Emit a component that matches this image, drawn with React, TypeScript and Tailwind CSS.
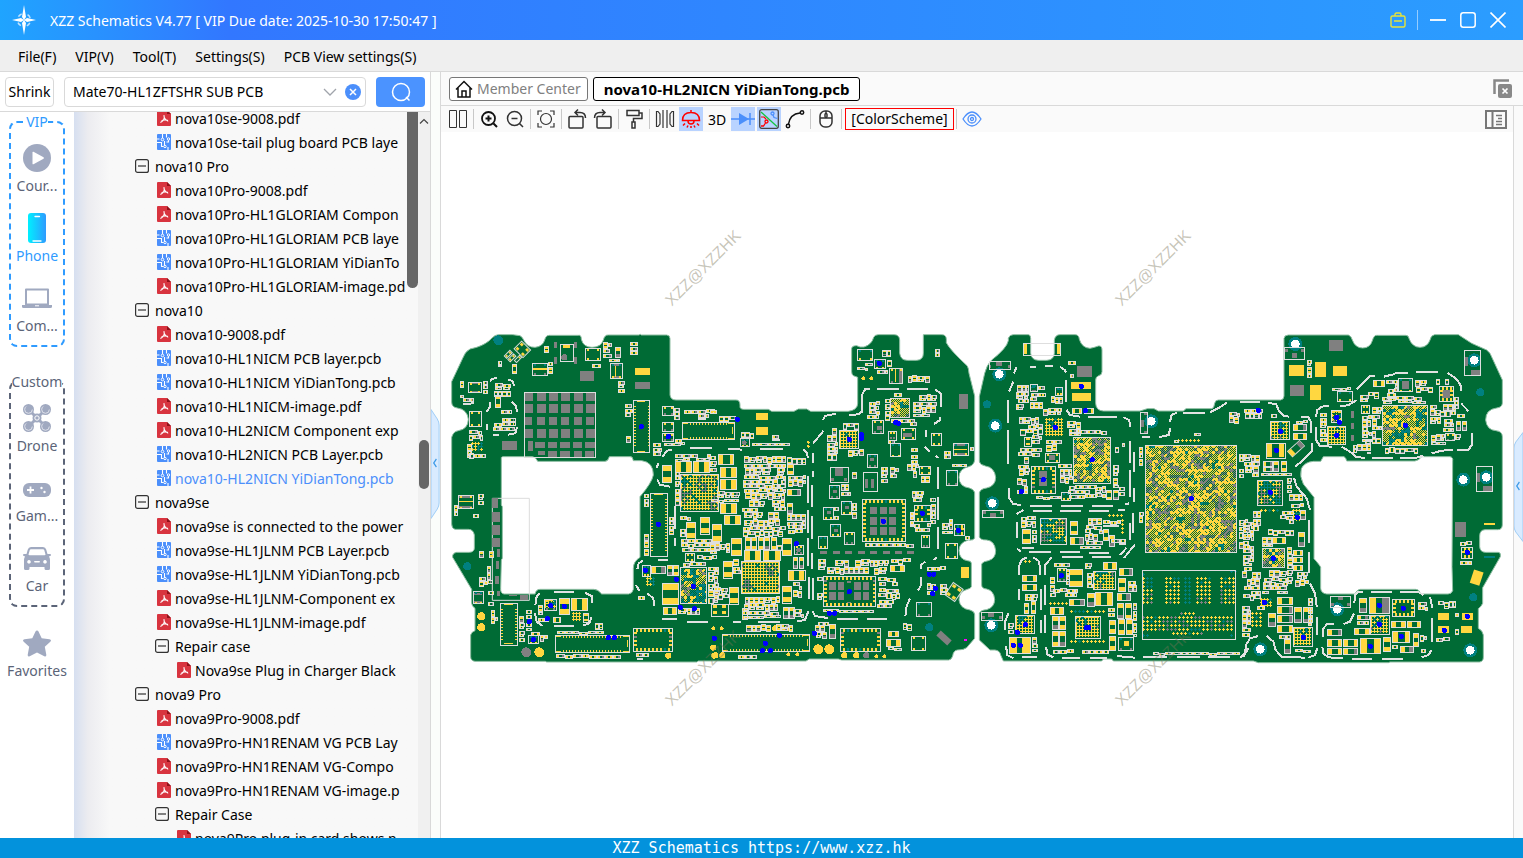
import { useState } from "react"
import type { ReactNode } from "react"

/* ---------------------------------- PCB drawing ---------------------------------- */

type Rect = [number, number, number, number]
type Ink = "yellow" | "grey" | "teal" | "magenta"

interface Section {
  ox: number
  boxes: Rect[]
  caps: Rect[]
  pads: Partial<Record<Ink, Rect[]>>
  // x, y, w, h, pitch, grey share, teal share
  bgas: [number, number, number, number, number, number, number][]
  dense: [number, number, number, number, number, number][]
  conns: Rect[]
  qfns: Rect[]
  clutter: Rect[]
  probes: [number, number][]
  rounds: [Ink, number, number, number][]
  holes: [number, number][]
  lines: string[]
}

const INK: Record<Ink, string> = {
  yellow: "#ffd740",
  grey: "#808080",
  teal: "#008080",
  magenta: "#ff00ff",
}

const thermalPads: Rect[] = []
for (const x of [253, 291, 328, 363, 402, 438]) {
  thermalPads.push([x, 217, 26, 26], [x, 253, 26, 26], [x, 291, 24, 24], [x, 327, 26, 26])
}

const SECTIONS: Section[] = [
  {
    ox: 0,
    boxes: [[253, 217, 214, 195], [277, 130, 45, 35], [359, 73, 39, 51], [434, 85, 45, 36], [511, 130, 36, 45], [85, 187, 39, 31], [88, 273, 36, 44], [55, 526, 45, 40], [99, 814, 31, 37], [667, 259, 34, 26], [667, 307, 34, 26], [667, 339, 34, 24], [606, 736, 24, 32], [265, 946, 30, 25], [736, 698, 26, 24], [721, 463, 115, 112], [721, 742, 79, 109], [312, 837, 36, 34]],
    caps: [[667, 436, 27, 50], [706, 422, 48, 33], [760, 422, 48, 33], [780, 590, 28, 50], [739, 605, 27, 50], [816, 612, 27, 50], [667, 790, 48, 62], [393, 835, 48, 36], [357, 835, 30, 48], [633, 738, 42, 20], [670, 860, 38, 20], [680, 736, 15, 30], [700, 736, 15, 30], [525, 82, 14, 30], [166, 226, 15, 36], [216, 132, 11, 26], [428, 878, 15, 26], [340, 890, 22, 14]],
    pads: {
      grey: [...thermalPads, [264, 363, 15, 30], [285, 366, 30, 18], [324, 366, 27, 18], [360, 366, 30, 18], [399, 366, 27, 18], [435, 366, 30, 18], [294, 393, 21, 12], [324, 393, 27, 18], [360, 393, 30, 18], [402, 393, 24, 18], [435, 393, 28, 18], [343, 66, 9, 18], [402, 66, 9, 18], [343, 112, 9, 20], [402, 112, 9, 20], [420, 152, 42, 31], [585, 186, 45, 21], [186, 362, 45, 27], [157, 535, 18, 30], [157, 577, 24, 29], [157, 615, 24, 30], [157, 653, 24, 28], [172, 687, 8, 25], [167, 723, 10, 24], [165, 768, 12, 24], [172, 813, 9, 14], [240, 825, 24, 15], [207, 825, 24, 3], [92, 189, 27, 4], [92, 213, 27, 4], [57, 528, 39, 7], [57, 558, 39, 7], [103, 818, 24, 5], [103, 842, 24, 5], [518, 132, 24, 5], [518, 168, 24, 5], [359, 837, 27, 12]],
      yellow: [[585, 144, 45, 21], [279, 145, 41, 5], [526, 138, 4, 34], [369, 74, 21, 10], [57, 544, 41, 3]],
    },
    bgas: [[724, 466, 110, 108, 9, 0.2, 0.1], [621, 775, 24, 27, 9, 0.1, 0.1], [315, 840, 30, 27, 9, 0.1, 0.1], [399, 880, 27, 24, 9, 0.2, 0], [97, 370, 30, 24, 9, 0.2, 0.1]],
    dense: [[723, 748, 75, 102, 0.15, 0.3]],
    conns: [[580, 241, 49, 156], [631, 520, 51, 190], [179, 848, 51, 125], [344, 946, 222, 51], [727, 307, 156, 51]],
    qfns: [[580, 925, 117, 69]],
    clutter: [[60, 180, 9, 54], [128, 182, 12, 40], [160, 190, 50, 40], [155, 268, 60, 18], [153, 293, 70, 40], [80, 330, 45, 32], [82, 370, 12, 45], [85, 398, 50, 18], [43, 530, 10, 60], [115, 520, 15, 40], [100, 583, 15, 12], [117, 692, 12, 28], [148, 692, 12, 28], [118, 768, 24, 30], [140, 735, 14, 60], [143, 790, 15, 70], [313, 78, 18, 36], [325, 125, 12, 55], [490, 65, 24, 48], [457, 130, 30, 12], [508, 115, 30, 9], [570, 64, 20, 45], [535, 182, 18, 33], [555, 252, 20, 45], [557, 348, 18, 42], [703, 262, 15, 48], [705, 335, 18, 40], [670, 366, 60, 8], [640, 368, 24, 40], [725, 268, 100, 12], [775, 280, 30, 20], [700, 400, 110, 21], [613, 522, 12, 40], [613, 640, 12, 70], [687, 590, 12, 55], [720, 588, 30, 12], [720, 625, 15, 24], [720, 655, 117, 40], [722, 725, 80, 12], [710, 862, 90, 26], [804, 740, 30, 110], [236, 885, 15, 85], [258, 870, 15, 60], [272, 932, 50, 12], [300, 945, 20, 24], [295, 892, 30, 12], [295, 838, 12, 45], [345, 932, 150, 10], [345, 1003, 225, 15], [465, 908, 20, 20], [585, 998, 40, 20], [595, 828, 18, 18], [153, 868, 18, 45], [705, 455, 12, 100], [770, 705, 60, 15], [70, 232, 30, 20], [175, 120, 10, 20], [252, 155, 12, 18]],
    probes: [[604, 320], [685, 350], [655, 613], [616, 751], [709, 778], [760, 799], [721, 862], [763, 866], [332, 857], [373, 859], [322, 896], [268, 905], [280, 959], [505, 953], [523, 953], [823, 955]],
    rounds: [["teal", 175, 61, 15], ["teal", 82, 739, 12], ["yellow", 124, 889, 12], ["yellow", 124, 922, 12], ["yellow", 298, 997, 15], ["grey", 259, 997, 15], ["grey", 373, 112, 9], ["yellow", 685, 1007, 9], ["yellow", 820, 925, 6], ["yellow", 820, 983, 9], ["yellow", 823, 1007, 9]],
    holes: [],
    lines: ["150,185 156,177 170,173", "205,178 218,184 222,198", "150,245 149,262 140,275", "215,245 226,255 232,275", "141,312 141,330", "160,344 178,344", "205,344 226,340 231,322", "286,855 290,830 300,820", "343,816 403,816", "435,818 455,828 457,850", "285,880 290,905 308,918", "343,918 403,918", "430,916 448,910 455,890", "656,428 649,445", "651,478 660,494 690,500", "750,384 815,384", "706,558 706,626", "706,655 706,678", "592,748 596,730 608,722", "588,795 598,812", "622,820 640,835 642,858", "667,897 710,897", "740,906 803,906", "655,720 685,720", "668,410 680,392 695,390"],
  },
  {
    ox: 810,
    boxes: [[442, 88, 46, 33], [538, 145, 40, 45], [487, 301, 33, 39], [573, 325, 41, 32], [664, 340, 30, 36], [541, 370, 31, 40], [730, 370, 45, 36], [709, 451, 34, 45], [470, 403, 31, 38], [361, 442, 55, 45], [460, 457, 42, 57], [357, 495, 31, 40], [340, 560, 30, 37], [394, 544, 31, 38], [706, 670, 36, 45], [325, 647, 27, 37], [361, 613, 30, 36], [403, 637, 30, 36], [619, 845, 45, 42], [603, 949, 43, 42], [90, 355, 27, 25], [634, 646, 24, 36], [493, 118, 33, 28], [3, 852, 50, 36], [252, 676, 28, 26], [535, 332, 24, 26], [628, 438, 34, 24], [94, 724, 115, 96], [388, 330, 57, 54], [541, 235, 58, 58]],
    caps: [[25, 402, 46, 31], [30, 442, 48, 30], [30, 477, 48, 30], [30, 550, 48, 30], [43, 586, 48, 26], [6, 612, 28, 50], [64, 655, 31, 50], [217, 655, 28, 50], [101, 690, 48, 30], [160, 690, 50, 30], [40, 722, 28, 50], [58, 800, 28, 50], [217, 797, 28, 50], [233, 750, 50, 30], [104, 652, 15, 36], [122, 652, 15, 36], [143, 652, 15, 36], [163, 652, 15, 36], [183, 652, 15, 36], [250, 712, 13, 32], [267, 712, 13, 32], [230, 432, 18, 30], [232, 508, 40, 18], [232, 548, 15, 30], [95, 865, 14, 32], [218, 860, 14, 34], [236, 860, 14, 34], [357, 912, 18, 42], [528, 956, 42, 21], [533, 932, 30, 14], [540, 736, 42, 18], [185, 478, 15, 32]],
    pads: {
      yellow: [[138, 279, 36, 21], [138, 321, 36, 24], [753, 741, 24, 33], [10, 856, 12, 10], [36, 856, 12, 10], [10, 874, 12, 10], [36, 874, 12, 10], [733, 386, 39, 4], [556, 148, 3, 39]],
      grey: [[747, 222, 27, 45], [330, 693, 21, 9], [369, 693, 21, 9], [405, 693, 21, 9], [444, 693, 21, 9], [480, 693, 21, 9], [519, 693, 21, 9], [555, 693, 21, 9], [591, 693, 21, 9], [375, 444, 25, 24], [480, 561, 21, 21], [510, 561, 21, 21], [537, 561, 21, 21], [480, 591, 21, 24], [510, 591, 21, 24], [537, 591, 21, 24], [480, 621, 21, 24], [510, 621, 21, 24], [537, 621, 21, 24], [357, 786, 21, 24], [384, 786, 18, 24], [432, 786, 21, 24], [459, 786, 18, 24], [357, 816, 21, 24], [384, 816, 18, 24], [432, 816, 21, 24], [459, 816, 18, 24], [412, 782, 12, 6], [412, 846, 12, 4], [466, 476, 9, 27], [484, 476, 9, 27], [568, 147, 9, 41], [500, 318, 15, 12], [580, 338, 27, 12], [733, 372, 39, 6], [733, 398, 39, 6], [480, 415, 12, 10], [368, 510, 12, 9], [350, 574, 12, 9], [404, 558, 12, 9], [371, 626, 12, 9], [363, 474, 9, 9], [403, 474, 9, 9]],
      magenta: [[762, 957, 9, 6]],
    },
    bgas: [[97, 727, 112, 93, 9, 0.1, 0.1], [391, 333, 52, 48, 9, 0.1, 0.05]],
    dense: [[544, 238, 54, 54, 0.3, 0.15]],
    conns: [[35, 942, 262, 51]],
    qfns: [[391, 925, 120, 69], [457, 538, 129, 126], [340, 768, 157, 90], [612, 556, 48, 48], [731, 613, 30, 33]],
    clutter: [[0, 268, 18, 12], [25, 286, 50, 18], [90, 335, 40, 18], [120, 368, 120, 10], [185, 342, 20, 20], [95, 408, 130, 240], [225, 412, 60, 20], [228, 465, 57, 40], [228, 580, 57, 65], [0, 514, 85, 30], [0, 668, 58, 30], [200, 652, 14, 40], [96, 828, 112, 66], [250, 865, 30, 26], [8, 800, 45, 40], [70, 715, 20, 70], [250, 785, 25, 50], [352, 322, 30, 78], [388, 388, 72, 28], [345, 402, 35, 20], [395, 308, 50, 20], [470, 243, 36, 52], [525, 235, 14, 66], [538, 296, 75, 15], [605, 222, 75, 66], [550, 218, 50, 16], [515, 88, 25, 20], [500, 150, 30, 14], [530, 120, 12, 20], [675, 85, 12, 28], [690, 90, 18, 18], [595, 165, 62, 22], [440, 142, 30, 10], [465, 128, 20, 10], [600, 290, 20, 30], [535, 358, 28, 12], [590, 430, 34, 50], [625, 465, 35, 30], [540, 440, 24, 36], [512, 440, 18, 55], [427, 455, 18, 26], [392, 492, 27, 34], [372, 560, 12, 40], [427, 547, 12, 54], [603, 512, 70, 36], [600, 550, 9, 72], [662, 550, 12, 62], [605, 610, 55, 28], [695, 595, 30, 45], [765, 622, 12, 33], [720, 430, 50, 9], [604, 380, 18, 54], [780, 380, 9, 18], [702, 390, 18, 28], [325, 715, 20, 40], [345, 718, 190, 45], [502, 772, 60, 30], [500, 805, 65, 30], [500, 838, 48, 30], [322, 770, 14, 70], [340, 868, 150, 10], [535, 714, 65, 18], [458, 668, 150, 14], [645, 738, 60, 18], [650, 790, 24, 36], [690, 790, 20, 36], [105, 912, 140, 24], [315, 912, 35, 44], [80, 1003, 60, 12], [530, 982, 45, 9], [570, 908, 36, 20], [0, 408, 18, 54], [325, 905, 30, 12], [220, 1000, 12, 12]],
    probes: [[82, 298], [508, 130], [418, 358], [455, 345], [455, 355], [557, 307], [565, 310], [520, 604], [637, 580], [745, 631], [658, 763], [671, 763], [676, 805], [668, 821], [418, 815], [358, 880], [374, 880], [259, 671], [13, 955], [208, 946], [166, 970], [157, 992], [181, 992], [313, 940]],
    rounds: [["yellow", 325, 988, 15], ["yellow", 358, 988, 15], ["yellow", 196, 925, 9], ["yellow", 232, 925, 9], ["yellow", 403, 1006, 9], ["yellow", 439, 1006, 9], ["grey", 469, 1006, 9], ["yellow", 16, 1006, 9], ["yellow", 37, 1006, 9], ["yellow", 35, 925, 6], ["yellow", 460, 175, 6], ["yellow", 484, 175, 6], ["yellow", 499, 1009, 6], ["yellow", 523, 1009, 6], ["yellow", 235, 1003, 6], ["yellow", 262, 1003, 6], ["yellow", 295, 367, 4], ["yellow", 295, 379, 4], ["teal", 658, 922, 12], ["grey", 103, 368, 7], ["grey", 266, 690, 7]],
    holes: [],
    lines: ["456,278 456,225 465,208 480,206", "500,207 567,207", "590,207 653,207", "675,208 692,220 692,262", "690,292 690,300 672,312", "648,330 648,350", "645,380 660,395", "677,407 686,414", "684,441 684,508", "684,530 684,600", "684,622 684,688", "682,712 670,720", "645,725 634,735 633,748", "633,770 633,795 624,812", "600,835 590,858 586,888", "418,285 445,283 455,275", "339,300 345,288 378,281", "309,371 340,333", "309,400 309,428", "309,453 309,470", "306,495 306,562", "306,588 306,658", "293,468 293,550", "293,570 293,638", "293,655 293,738", "306,700 306,748", "297,770 297,838", "309,775 309,840", "280,388 290,397 294,415", "53,386 75,386 97,390", "150,387 218,387", "70,906 92,906", "145,906 210,906", "262,904 285,900 296,872", "307,872 315,888 353,894", "382,897 445,897", "472,897 530,897"],
  },
  {
    ox: 1590,
    boxes: [[160, 70, 110, 37], [58, 124, 64, 24], [37, 570, 63, 22], [34, 877, 63, 24], [511, 277, 22, 64], [517, 751, 280, 207], [118, 951, 64, 48], [444, 951, 46, 38], [316, 888, 76, 66], [526, 374, 274, 322], [310, 350, 110, 137], [180, 193, 22, 22], [256, 200, 22, 24], [224, 398, 42, 27], [260, 744, 28, 40], [273, 515, 26, 24], [162, 350, 20, 26], [211, 595, 78, 78], [370, 754, 67, 54], [136, 886, 58, 54]],
    caps: [[157, 628, 25, 42], [301, 604, 22, 40], [301, 650, 38, 22], [298, 748, 38, 50], [375, 817, 52, 40], [445, 775, 22, 38], [448, 743, 40, 22], [441, 820, 38, 22], [245, 888, 18, 40], [268, 888, 18, 40], [245, 933, 18, 45], [268, 933, 18, 45], [442, 850, 18, 46], [466, 850, 18, 46], [444, 896, 18, 45], [468, 896, 18, 45], [157, 766, 43, 18], [157, 793, 43, 18], [400, 727, 38, 22], [240, 862, 40, 20], [418, 900, 18, 40], [418, 948, 18, 42], [298, 838, 44, 18], [400, 626, 14, 34], [418, 645, 14, 32], [306, 263, 27, 15], [342, 263, 27, 15], [408, 510, 15, 27], [428, 510, 15, 27], [163, 850, 13, 30], [184, 843, 13, 36], [350, 818, 22, 40]],
    pads: {
      yellow: [[162, 73, 9, 31], [261, 73, 8, 31], [303, 186, 60, 21], [306, 220, 57, 24], [120, 953, 21, 44], [156, 953, 24, 44], [461, 963, 14, 14]],
      grey: [[321, 138, 45, 33], [58, 135, 6, 9], [114, 135, 6, 9], [78, 126, 18, 12], [60, 579, 18, 12], [39, 572, 8, 9], [90, 572, 8, 9], [54, 879, 18, 12], [36, 889, 8, 9], [88, 889, 8, 9], [512, 300, 10, 20], [522, 279, 10, 6], [522, 333, 10, 6], [207, 453, 24, 20], [207, 478, 24, 20], [237, 404, 18, 15]],
      teal: [[184, 200, 12, 3], [260, 208, 12, 3]],
    },
    bgas: [[229, 298, 51, 51, 9, 0.1, 0.05], [214, 598, 74, 72, 9, 0.25, 0.3], [373, 757, 63, 50, 9, 0.2, 0.2], [139, 889, 54, 50, 9, 0.1, 0.1], [319, 892, 72, 60, 9, 0.1, 0.1], [304, 874, 98, 12, 12, 0.05, 0.2], [304, 964, 98, 10, 12, 0.05, 0.1], [520, 775, 36, 76, 12, 0.2, 0.05], [589, 775, 42, 76, 12, 0.1, 0.05], [646, 775, 22, 76, 12, 0, 1], [682, 775, 40, 76, 12, 0.2, 0.05], [754, 775, 42, 76, 12, 0.3, 0.1], [520, 892, 275, 42, 12, 0.3, 0.05], [610, 940, 90, 6, 12, 0.1, 0.1], [634, 880, 40, 8, 12, 0.4, 0], [418, 586, 46, 10, 12, 0, 0], [457, 600, 8, 40, 12, 0, 0.1], [625, 361, 64, 6, 12, 0, 0], [240, 850, 50, 6, 12, 0, 0], [518, 762, 8, 8, 12, 0, 1], [784, 752, 16, 8, 12, 0, 1], [518, 944, 16, 8, 12, 0, 1], [784, 944, 12, 8, 12, 0, 1], [166, 724, 20, 6, 12, 0, 0]],
    dense: [[528, 375, 273, 321, 0.28, 0.06], [312, 351, 108, 135, 0.3, 0.08]],
    conns: [],
    qfns: [[184, 437, 72, 82]],
    clutter: [[138, 193, 36, 80], [178, 218, 45, 50], [235, 228, 40, 28], [205, 195, 18, 20], [145, 290, 75, 55], [185, 345, 28, 30], [145, 382, 70, 24], [215, 264, 58, 26], [290, 303, 40, 44], [320, 330, 90, 15], [140, 410, 36, 60], [220, 358, 60, 36], [262, 432, 42, 60], [288, 495, 90, 40], [375, 498, 30, 36], [190, 527, 80, 10], [140, 475, 30, 50], [430, 368, 34, 30], [430, 435, 15, 66], [448, 500, 15, 25], [150, 588, 45, 36], [186, 630, 12, 40], [345, 592, 50, 85], [400, 600, 50, 20], [250, 728, 50, 12], [288, 745, 9, 50], [240, 770, 15, 50], [240, 805, 80, 24], [345, 727, 24, 26], [352, 757, 15, 52], [475, 767, 24, 50], [415, 865, 18, 30], [160, 818, 40, 24], [245, 988, 170, 12], [508, 378, 10, 60], [508, 575, 12, 35], [540, 995, 270, 8], [778, 275, 30, 36], [808, 398, 12, 90], [808, 598, 24, 55], [115, 907, 15, 36], [187, 950, 14, 45], [155, 680, 35, 7], [300, 677, 90, 8], [490, 848, 10, 100], [295, 122, 26, 14], [300, 160, 9, 18], [420, 655, 45, 20], [808, 665, 20, 40], [612, 358, 12, 10], [672, 336, 18, 10]],
    probes: [[334, 199], [346, 272], [256, 322], [367, 419], [220, 479], [154, 515], [664, 536], [274, 767], [166, 914], [142, 937], [130, 976], [151, 976], [349, 923], [356, 923]],
    rounds: [["teal", 51, 253, 12]],
    holes: [[88, 163], [76, 317], [67, 550], [64, 916], [544, 304]],
    lines: ["140,140 132,160", "180,141 198,141", "225,139 248,139", "270,141 285,150 288,158", "130,185 117,215", "289,180 289,245", "114,240 114,310", "114,330 114,432", "118,505 118,535 130,552 152,555", "290,270 300,285 330,290", "355,291 440,291", "460,292 478,300 480,320", "480,362 480,430", "480,450 480,530", "492,395 492,455", "492,505 492,545", "465,553 478,550", "180,557 245,557", "273,557 340,557", "367,557 430,557", "140,582 160,570", "190,573 245,573", "270,573 333,573", "358,573 418,573", "445,571 466,570", "141,605 141,655", "140,685 152,695", "177,695 242,695", "270,695 330,695", "358,698 418,698", "489,578 489,640", "480,610 480,660", "450,705 470,683", "462,714 495,673", "147,765 146,740 155,720 170,712", "190,712 205,722 210,740 210,765", "225,765 226,735 245,712", "275,711 338,711", "365,711 422,711", "146,808 146,840", "213,808 213,870", "225,795 225,855", "225,885 225,940", "105,930 105,905 115,880", "108,978 112,1005 130,1015", "155,1012 200,1010", "213,900 213,940", "228,980 232,1003 250,1012", "275,1013 330,1013", "360,1013 410,1013", "440,1008 495,1013", "520,1010 590,1010", "620,1010 690,1012", "715,1012 780,1010", "600,305 605,285 620,278", "640,279 705,279", "720,277 750,262 770,248", "600,325 597,345 568,351", "515,352 540,352", "820,1010 835,985"],
  },
  {
    ox: 2400,
    boxes: [[133, 82, 60, 36], [292, 213, 45, 29], [673, 91, 48, 75], [709, 438, 48, 76], [271, 829, 61, 33], [387, 832, 60, 48], [78, 368, 58, 45], [474, 175, 43, 40], [427, 256, 136, 120], [273, 270, 30, 36], [363, 255, 24, 24], [616, 340, 28, 22], [52, 479, 76, 74], [90, 304, 57, 54], [262, 319, 54, 54], [160, 922, 58, 57], [390, 886, 57, 57], [66, 685, 67, 58]],
    caps: [[112, 832, 46, 22], [112, 858, 46, 22], [112, 886, 46, 22], [112, 915, 46, 22], [162, 862, 20, 46], [188, 862, 20, 46], [262, 928, 43, 18], [262, 956, 43, 20], [262, 984, 43, 18], [310, 956, 43, 20], [310, 984, 43, 18], [360, 955, 60, 45], [457, 933, 52, 33], [453, 903, 42, 18], [502, 903, 40, 18], [343, 925, 45, 18], [358, 835, 20, 42], [428, 950, 20, 42], [160, 312, 40, 18], [160, 340, 40, 18], [175, 635, 17, 42], [97, 650, 40, 18], [133, 958, 18, 42], [85, 878, 20, 40], [350, 886, 35, 12], [400, 180, 33, 18], [648, 303, 13, 28], [665, 303, 13, 28], [180, 570, 15, 28], [480, 978, 40, 18], [70, 424, 26, 15], [70, 442, 26, 12], [100, 424, 15, 30], [122, 424, 15, 30], [518, 938, 14, 40], [160, 690, 28, 15], [160, 712, 28, 15], [160, 735, 28, 15]],
    pads: {
      grey: [[267, 60, 42, 33], [150, 195, 42, 33], [645, 606, 33, 45], [155, 98, 15, 15], [135, 88, 8, 8], [184, 88, 8, 8], [694, 150, 27, 14], [730, 498, 27, 15], [674, 111, 8, 27], [710, 458, 8, 27], [333, 273, 9, 21], [333, 309, 9, 18], [333, 345, 9, 18], [485, 183, 22, 23], [427, 832, 20, 48], [294, 832, 15, 9], [274, 848, 8, 9], [322, 848, 8, 9], [607, 210, 24, 24]],
      yellow: [[147, 135, 45, 33], [225, 126, 33, 45], [279, 138, 42, 30], [210, 195, 33, 45], [594, 879, 33, 21], [666, 879, 33, 21], [594, 918, 33, 21], [663, 918, 33, 21], [732, 609, 33, 6], [80, 370, 15, 42], [118, 370, 15, 42], [387, 832, 22, 48]],
      teal: [[732, 708, 33, 6]],
    },
    bgas: [[265, 322, 48, 48, 9, 0.1, 0.05], [93, 307, 52, 50, 9, 0.2, 0.1], [55, 482, 72, 70, 9, 0.25, 0.3], [163, 925, 54, 52, 9, 0.1, 0.1], [393, 889, 52, 54, 9, 0.25, 0.1], [36, 878, 36, 42, 12, 0.1, 0.1], [64, 570, 50, 8, 12, 0, 0.1], [276, 274, 26, 30, 12, 0, 0.1], [158, 570, 20, 30, 9, 0, 0.1], [64, 838, 30, 24, 9, 0.2, 0.1]],
    dense: [[429, 258, 132, 117, 0.1, 0.25], [69, 687, 63, 54, 0.3, 0.15]],
    conns: [],
    qfns: [[456, 837, 66, 52], [598, 198, 42, 45], [664, 681, 33, 33]],
    clutter: [[10, 264, 55, 30], [68, 282, 40, 14], [145, 180, 45, 6], [220, 180, 62, 6], [200, 118, 12, 60], [268, 202, 60, 8], [160, 300, 40, 9], [8, 402, 50, 75], [60, 458, 95, 10], [140, 472, 12, 45], [140, 520, 45, 24], [40, 572, 20, 60], [118, 572, 40, 40], [150, 550, 40, 15], [10, 605, 30, 130], [5, 740, 55, 100], [78, 628, 80, 18], [60, 650, 35, 30], [140, 678, 16, 120], [65, 750, 75, 70], [162, 755, 40, 50], [5, 855, 24, 100], [205, 832, 12, 90], [350, 358, 40, 42], [240, 278, 18, 85], [365, 285, 28, 80], [395, 260, 28, 110], [360, 225, 60, 24], [435, 178, 36, 66], [520, 178, 60, 40], [580, 175, 50, 18], [385, 215, 30, 20], [425, 228, 130, 22], [570, 255, 30, 60], [600, 250, 45, 40], [605, 295, 35, 40], [643, 215, 12, 50], [427, 382, 105, 18], [568, 342, 45, 30], [646, 340, 15, 24], [650, 282, 28, 15], [652, 662, 42, 15], [652, 685, 9, 30], [658, 722, 36, 15], [535, 845, 28, 32], [587, 842, 58, 20], [587, 952, 40, 18], [645, 880, 10, 15], [645, 925, 10, 18], [540, 945, 18, 20], [455, 975, 15, 28], [525, 985, 30, 12], [310, 928, 32, 15], [155, 988, 60, 10], [110, 942, 40, 12], [350, 902, 35, 15], [50, 858, 30, 12], [340, 372, 10, 24]],
    probes: [[55, 271], [121, 334], [109, 391], [290, 292], [298, 307], [290, 346], [496, 316], [91, 517], [172, 592], [100, 715], [73, 847], [190, 952], [418, 856], [418, 913], [490, 865], [484, 949], [391, 979], [682, 697], [682, 889], [613, 931]],
    rounds: [["teal", 721, 217, 12], ["teal", 700, 832, 12]],
    holes: [[166, 72], [703, 121], [670, 479], [739, 472], [292, 868], [61, 988], [691, 991]],
    lines: ["0,246 60,246", "85,249 108,252 118,275 130,287 148,290", "182,290 205,292 213,305 213,340", "215,368 215,395 190,420 165,440", "162,473 170,500 200,535 210,570", "207,600 207,668", "207,697 207,760", "210,790 225,820 230,860", "232,892 232,945", "232,985 225,1005 205,1013", "0,1013 15,1000 18,975 30,955 55,948", "80,948 100,965 107,990 125,1010 195,1013", "228,290 232,270 245,260 267,258", "300,258 325,256 350,240", "350,208 390,168 405,167", "432,170 460,163 470,158 503,158", "527,156 593,156", "623,158 650,178 663,198 663,213", "663,250 685,273", "696,340 695,375 685,390 652,390", "638,390 605,392 575,400", "550,407 530,413 480,415", "458,414 397,414", "375,413 350,412 330,395 305,380", "275,380 240,378 228,360 227,320", "343,850 345,825 355,815 370,815", "392,816 455,816", "480,816 535,816 550,825", "570,830 577,865", "576,895 576,965", "575,990 565,1005 545,1012", "248,950 250,925 262,912 283,912", "310,912 330,905 342,880", "247,980 250,1000 265,1012 310,1015", "335,1016 397,1016", "427,1016 490,1016"],
  },
]

const LEFT_BOARD =
  "M35 185L68 115Q75 95 90 87L110 82Q140 72 155 55Q165 44 175 44H218L240 47Q247 50 252 62Q262 82 285 82Q308 80 314 60Q317 46 328 46H415Q424 44 424 58Q430 82 456 82Q483 82 490 60Q494 44 505 45H598L600 42L604 45H680Q690 45 690 56V225Q692 240 708 240H888Q900 240 900 255V262Q902 268 910 268H985L995 274H1062L1075 267H1100L1112 274H1225Q1253 270 1253 250V172L1240 167Q1235 164 1235 155V85Q1236 77 1250 77L1260 81H1272Q1295 74 1301 52Q1304 44 1315 44H1362Q1378 44 1379 60V100Q1382 121 1402 121H1430Q1450 120 1450 100V44H1505Q1519 44 1519 58V68Q1530 90 1582 138Q1586 145 1587 160L1604 228V420Q1602 436 1586 440Q1557 446 1557 472Q1557 500 1588 504Q1602 508 1604 518V655Q1600 662 1585 660Q1557 668 1557 692Q1558 718 1582 722Q1594 722 1594 730V800Q1592 806 1582 808Q1557 814 1557 840Q1560 866 1590 870Q1604 874 1604 884V955L1580 983Q1572 990 1552 990Q1540 992 1538 1008Q1534 1020 1526 1020H1205L1195 1017H1108L1098 1023H775L770 1026H320L316 1024H105Q92 1022 92 1010V945Q94 936 105 932V865Q96 860 95 850V808L38 712Q36 700 50 697H88Q103 696 103 684V645Q100 628 85 628H45Q35 626 35 612V352Q40 334 55 332Q84 328 85 298Q82 268 52 264Q35 262 35 246Z" +
  "M188 410H278Q288 412 293 424H495Q504 424 508 410H570Q578 408 580 422H605Q640 426 640 465Q636 488 600 530V712Q580 724 580 745V808Q578 820 566 822H485Q474 808 462 808H300Q288 808 285 822H192Q181 820 182 805L184 720L187 715V560L184 555V420Q182 410 188 410Z"

const RIGHT_BOARD =
  "M1705 55Q1708 44 1720 44H1765Q1772 44 1772 55V100Q1774 120 1795 121H1820Q1842 120 1843 100V60Q1846 44 1860 44H1905Q1917 44 1918 58Q1926 84 1950 85Q1965 82 1975 78Q1986 76 1986 90V155Q1986 165 1976 167Q1967 170 1967 180V250Q1968 272 1990 273H2100L2122 266H2142L2155 273H2230L2238 266H2315Q2322 266 2324 250Q2326 240 2335 240H2522Q2532 238 2532 228V55Q2534 45 2545 45H2725Q2734 48 2737 60Q2746 84 2768 84Q2790 84 2797 62Q2802 44 2812 46H2898Q2906 46 2908 58Q2918 82 2940 82Q2962 82 2970 60Q2972 46 2984 44H3055L3095 70L3140 90L3150 100L3187 180V250Q3186 262 3170 264Q3137 268 3137 300Q3140 330 3168 332Q3187 334 3187 350V615Q3186 630 3172 629H3135Q3119 630 3119 648V680Q3120 696 3136 697H3175Q3184 698 3181 710L3128 803V850Q3124 860 3115 866V925Q3128 932 3130 945V1012Q3130 1025 3118 1026H3060L2850 1026L2845 1028H2455L2440 1023H2020L2015 1017H1990L1985 1023H1690L1682 1005Q1680 992 1665 990H1650L1618 960V880Q1622 870 1640 869Q1664 862 1664 838Q1662 812 1640 807Q1625 806 1625 795V732Q1628 724 1645 722Q1667 716 1667 692Q1664 662 1640 660Q1620 660 1618 650V518Q1622 506 1640 504Q1667 498 1667 472Q1664 442 1636 438Q1618 434 1618 424V230L1634 160Q1640 135 1655 120Q1700 85 1705 62Z" +
  "M2650 410H2712Q2718 412 2720 423H2925Q2938 420 2945 410H3030Q3040 412 3038 422L3036 740L3038 812Q3034 822 3024 822H2942Q2938 808 2926 808H2760Q2750 810 2745 822H2660Q2643 820 2642 805V742Q2640 736 2622 716V532L2590 492Q2578 470 2584 446Q2594 426 2620 424H2642Z"

const snap = (v: number) => Math.round(v / 3) * 3
const box = (x: number, y: number, w: number, h: number) =>
  `M${snap(x)} ${snap(y)}h${Math.max(3, snap(w))}v${Math.max(3, snap(h))}h${-Math.max(3, snap(w))}z`

const buildSection = (s: Section) => {
  let seed = 17 + s.ox
  const rnd = () => {
    seed = (seed * 16807) % 2147483647
    return seed / 2147483647
  }
  const out = { silk: "", yellow: "", grey: "", teal: "", magenta: "" }
  const cross: Record<"yellow" | "grey" | "teal", string> = { yellow: "", grey: "", teal: "" }
  const frame = (x: number, y: number, w: number, h: number) => {
    out.silk += `M${snap(x) + 1.5} ${snap(y) + 1.5}h${snap(w)}v${snap(h)}h${-snap(w)}z`
  }

  const part = (x: number, y: number, w: number, h: number) => {
    frame(x, y, w, h)
    const big = w > 24 && h > 24
    const second = !big && rnd() < 0.5 ? "grey" : "yellow"
    const tall = h > w
    const len = tall ? h : w
    const p = Math.max(3, snap((len - 3) * 0.3))
    if (tall) {
      out.yellow += box(x + 3, y + 3, w - 3, p)
      out[second] += box(x + 3, y + h - p, w - 3, p)
    } else {
      out.yellow += box(x + 3, y + 3, p, h - 3)
      out[second] += box(x + w - p, y + 3, p, h - 3)
    }
  }

  s.boxes.forEach(([x, y, w, h]) => {
    frame(x, y, w, h)
    // corner pads of small packages
    if (w < 47 && h < 47) {
      const ink = rnd() < 0.35 ? "teal" : "yellow"
      const side = rnd() < 0.4 ? "grey" : "yellow"
      out[ink] += box(x + 6, y + 3, 6, 6) + box(x + w - 9, y + 3, 6, 6)
      out[side] += box(x + 6, y + h - 6, 6, 6) + box(x + w - 9, y + h - 6, 6, 6)
    }
  })
  s.caps.forEach(c => part(...c))
  for (const ink of Object.keys(s.pads) as Ink[]) {
    s.pads[ink]?.forEach(p => { out[ink] += box(...p) })
  }

  // connectors: one row of pins on each long side
  s.conns.forEach(([x, y, w, h]) => {
    frame(x, y, w, h)
    if (h > w) {
      for (let py = y + 18; py < y + h - 15; py += 9) out.yellow += box(x + 3, py, 6, 3) + box(x + w - 6, py, 6, 3)
      out.yellow += box(x + 12, y + 3, w - 24, 3) + box(x + 12, y + h - 3, w - 24, 3)
    } else {
      for (let px = x + 24; px < x + w - 20; px += 9) out.yellow += box(px, y + 3, 3, 6) + box(px, y + h - 6, 3, 6)
      out.yellow += box(x + 3, y + 3, 15, 3) + box(x + w - 18, y + 3, 18, 3) + box(x + 3, y + h - 3, 15, 3) + box(x + w - 18, y + h - 3, 18, 3)
      out.yellow += box(x + w - 6, y + 15, 3, h - 30)
    }
  })

  // packages with pads on all four sides
  s.qfns.forEach(([x, y, w, h]) => {
    frame(x, y, w, h)
    for (let px = x + 9; px < x + w - 6; px += 12) {
      const ink = rnd() < 0.1 ? "teal" : "yellow"
      out[ink] += box(px, y + 3, 6, 9) + box(px, y + h - 9, 6, 9)
    }
    for (let py = y + 12; py < y + h - 12; py += 12) {
      const ink = rnd() < 0.12 ? "grey" : "yellow"
      out[ink] += box(x + 3, py, 9, 6) + box(x + w - 9, py, 9, 6)
    }
  })

  const pick = (ix: number, iy: number, grey: number, teal: number): "yellow" | "grey" | "teal" => {
    const n = Math.sin(ix * 0.55 + iy * 0.2 + s.ox) * Math.cos(iy * 0.47 - ix * 0.13) * 0.5 + 0.5
    const v = n * 0.5 + rnd() * 0.5
    if (grey > 0 && v < grey + 0.1) return "grey"
    if (teal > 0 && v > 0.88 - teal) return "teal"
    return "yellow"
  }

  s.bgas.forEach(([x, y, w, h, pitch, grey, teal]) => {
    for (let iy = 0; iy * pitch < h; iy++) {
      for (let ix = 0; ix * pitch < w; ix++) {
        const ink = teal === 1 ? "teal" : pick(ix, iy, grey, teal)
        cross[ink] += `M${snap(x) + ix * pitch - 3} ${snap(y) + iy * pitch + 1.5}h9m-4.5 -4.5v9`
      }
    }
  })

  // fine pitch arrays: a checkered mesh, coloured ball by ball, some balls fully filled
  s.dense.forEach(([x, y, w, h, grey, teal]) => {
    for (let by = 0; by * 9 < h; by++) {
      for (let bx = 0; bx * 9 < w; bx++) {
        const ink = pick(bx, by, grey, teal)
        const solid = rnd() < (by % 5 === 2 || bx % 7 === 3 ? 0.75 : 0.4)
        for (let i = 0; i < 9; i++) {
          const px = bx * 3 + (i % 3)
          const py = by * 3 + Math.floor(i / 3)
          const filled = (px + py) % 2 === 0 || (solid && i !== 0 && i !== 8)
          if (filled && px * 3 < w && py * 3 < h) {
            out[ink] += `M${snap(x) + px * 3} ${snap(y) + py * 3}h3v3h-3z`
          }
        }
      }
    }
  })

  // small passives packed in rows
  s.clutter.forEach(([x, y, w, h]) => {
    let cy = y
    while (cy < y + h - 4) {
      const rowH = Math.min(y + h - cy, rnd() < 0.5 ? 12 : 21)
      let cx = x + (w > 30 ? rnd() * 9 : 0)
      while (cx < x + w - 4) {
        const upright = rowH > 15 && rnd() < 0.7
        const pw = Math.min(x + w - cx, upright ? 9 + snap(rnd() * 5) : 15 + snap(rnd() * 9))
        const ph = Math.min(rowH - 3, upright ? 18 : 9)
        if (rnd() < 0.88 && pw > 5 && ph > 3) {
          part(cx, cy + rnd() * 3, pw, ph)
          if (!upright && rowH > 20 && pw > 9) part(cx, cy + 12, pw - 3, 6)
        }
        cx += pw + 3
      }
      cy += rowH + 1
    }
  })

  return { out, cross }
}

const PARTS = SECTIONS.map(s => ({ section: s, ...buildSection(s) }))

const WATERMARKS = [[789, -156], [2139, -156], [789, 1044], [2139, 1044]]

function BoardView() {
  return (
    <svg viewBox="3 -564 3216 2118" className="block h-full w-full" role="img" aria-label="Board layout">
      <g fill="#006b35" fillRule="evenodd" stroke="#8fbfa3" strokeWidth="3">
        <path d={LEFT_BOARD} />
        <path d={RIGHT_BOARD} />
      </g>
      <path d="M157 535H268V841H157z" fill="none" stroke="#dcdcdc" strokeWidth="3" />
      {PARTS.map(({ section, out, cross }) => (
        <g key={section.ox} transform={`translate(${section.ox} 0)`} shapeRendering="crispEdges">
          {section.rounds.map(([ink, x, y, r]) => (
            <circle key={`${x}-${y}`} cx={x} cy={y} r={r} fill={INK[ink]} />
          ))}
          {section.holes.map(([x, y]) => (
            <g key={`${x}-${y}`}>
              <circle cx={x} cy={y} r="21" fill="#008080" />
              <circle cx={x} cy={y} r="13" fill="#fff" />
            </g>
          ))}
          <path d={out.grey} fill={INK.grey} />
          <path d={out.yellow} fill={INK.yellow} />
          <path d={out.teal} fill={INK.teal} />
          <path d={out.magenta} fill={INK.magenta} />
          <path d={cross.grey} stroke={INK.grey} strokeWidth="3" fill="none" />
          <path d={cross.yellow} stroke={INK.yellow} strokeWidth="3" fill="none" />
          <path d={cross.teal} stroke={INK.teal} strokeWidth="3" fill="none" />
          <path d={out.silk} stroke="#dedede" strokeWidth="3" fill="none" />
          {section.lines.map(points => (
            <polyline key={points} points={points} fill="none" stroke="#e2e2e2" strokeWidth="6" />
          ))}
          {section.probes.map(([x, y]) => (
            <circle key={`${x}-${y}`} cx={x} cy={y} r="8" fill="#0000ff" />
          ))}
        </g>
      ))}
      {/* parts placed at an angle */}
      <rect x="-22" y="-10" width="44" height="20" fill="#808080" transform="translate(1512 954) rotate(42)" />
      <rect x="-15" y="-21" width="30" height="42" fill="#ffd740" transform="translate(3110 773) rotate(18)" />
      <g transform="translate(247 88) rotate(45)">
        <rect x="-19" y="-16" width="38" height="32" fill="none" stroke="#dedede" strokeWidth="3" />
        <path d="M-16 -13h9v8h-9zM7 -13h9v8h-9zM-16 5h9v8h-9zM7 5h9v8h-9z" fill="#ffd740" />
      </g>
      <g transform="translate(212 110) rotate(45)">
        <path d="M-15 -12h10v24h-10zM0 -12h10v24h-10zM16 -22h9v22h-9z" fill="none" stroke="#dedede" strokeWidth="3" />
        <path d="M-13 -10h6v6h-6zM-13 4h6v6h-6zM2 -10h6v6h-6zM2 4h6v6h-6zM18 -20h5v6h-5z" fill="#ffd740" />
      </g>
      <g transform="translate(1542 816) rotate(35)">
        <rect x="-18" y="-22" width="36" height="44" fill="none" stroke="#dedede" strokeWidth="3" />
        <path d="M-15 -19h11v9h-11zM4 -19h11v9h-11zM-15 10h11v9h-11zM4 10h11v9h-11z" fill="#ffd740" />
      </g>
      <g transform="translate(2568 386) rotate(-42)">
        <rect x="-24" y="-11" width="48" height="22" fill="none" stroke="#dedede" strokeWidth="3" />
        <path d="M-24 -10h13v20h-13z" fill="#ffd740" />
        <path d="M11 -10h13v20h-13z" fill="#808080" />
      </g>
      {WATERMARKS.map(([x, y]) => (
        <text
          key={`${x}-${y}`}
          x={x}
          y={y + 16}
          transform={`rotate(-45 ${x} ${y})`}
          textAnchor="middle"
          className="font-['Liberation_Sans',sans-serif] text-[48px]"
          fill="#7a7458"
          fillOpacity="0.42"
        >
          XZZ@XZZHK
        </text>
      ))}
    </svg>
  )
}

/* ---------------------------------- Icons ---------------------------------- */

function LogoIcon() {
  return (
    <svg viewBox="0 0 24 30" className="h-[30px] w-6">
      <path d="M12 0l2 12-2 3-2-3zM12 30l-2-12 2-3 2 3zM0 15l9-2 3 2-3 2zM24 15l-9 2-3-2 3-2z" fill="#fff" />
      <circle cx="12" cy="15" r="6.5" fill="none" stroke="#bfe3ff" strokeWidth="1.5" strokeDasharray="4 6.2" strokeDashoffset="-3" />
    </svg>
  )
}

function PdfIcon() {
  return (
    <svg viewBox="0 0 14 16" className="h-4 w-3.5 shrink-0">
      <path d="M1 0h9l4 4v11a1 1 0 0 1-1 1H1a1 1 0 0 1-1-1V1a1 1 0 0 1 1-1z" fill="#d8343f" />
      <path d="M10 0l4 4h-4z" fill="#8f1119" />
      <path d="M7 5.5c.8 2.8-1 5.5-3.200 6.800M7 7c.7 2 2 3.300 3.800 4M5 10.500c1.800-.8 3.800-.8 5.500-.2" fill="none" stroke="#fff" strokeWidth="1.100" strokeLinecap="round" />
    </svg>
  )
}

function PcbIcon() {
  return (
    <svg viewBox="0 0 14 16" className="h-4 w-3.5 shrink-0">
      <rect width="14" height="16" rx="1" fill="#4b8ffb" />
      <path d="M5.500 0v4M9.500 0v3.500M0 8.500h4.500v4h2M7.500 7v6M9.500 8h2V5.500M11 13v3M0 5h2.500" fill="none" stroke="#fff" strokeWidth="1.100" />
      <g fill="#4b8ffb" stroke="#fff" strokeWidth="1">
        <circle cx="5.500" cy="5.500" r="1.300" />
        <circle cx="11.500" cy="5" r="1.200" />
        <circle cx="8" cy="12.500" r="1.200" />
      </g>
    </svg>
  )
}

function ToggleIcon() {
  return (
    <svg viewBox="0 0 14 14" className="h-3.5 w-3.5 shrink-0" fill="none" stroke="#333" strokeWidth="1.200">
      <rect x="0.600" y="0.600" width="12.800" height="12.800" rx="2" />
      <path d="M3 7h8" />
    </svg>
  )
}

/* ---------------------------------- Data ---------------------------------- */

type Kind = "pdf" | "pcb" | "group"
interface TreeRow { kind: Kind; label: string; level: number }

const row = (kind: Kind, label: string, level = 1): TreeRow => ({ kind, label, level })

const TREE: TreeRow[] = [
  row("pdf", "nova10se-9008.pdf"),
  row("pcb", "nova10se-tail plug board PCB laye"),
  row("group", "nova10 Pro", 0),
  row("pdf", "nova10Pro-9008.pdf"),
  row("pdf", "nova10Pro-HL1GLORIAM Compon"),
  row("pcb", "nova10Pro-HL1GLORIAM PCB laye"),
  row("pcb", "nova10Pro-HL1GLORIAM YiDianTo"),
  row("pdf", "nova10Pro-HL1GLORIAM-image.pd"),
  row("group", "nova10", 0),
  row("pdf", "nova10-9008.pdf"),
  row("pcb", "nova10-HL1NICM PCB layer.pcb"),
  row("pcb", "nova10-HL1NICM YiDianTong.pcb"),
  row("pdf", "nova10-HL1NICM-image.pdf"),
  row("pdf", "nova10-HL2NICM Component exp"),
  row("pcb", "nova10-HL2NICN PCB Layer.pcb"),
  row("pcb", "nova10-HL2NICN YiDianTong.pcb"),
  row("group", "nova9se", 0),
  row("pdf", "nova9se is connected to the power"),
  row("pcb", "nova9se-HL1JLNM PCB Layer.pcb"),
  row("pcb", "nova9se-HL1JLNM YiDianTong.pcb"),
  row("pdf", "nova9se-HL1JLNM-Component ex"),
  row("pdf", "nova9se-HL1JLNM-image.pdf"),
  row("group", "Repair case", 1),
  row("pdf", "Nova9se Plug in Charger Black", 2),
  row("group", "nova9 Pro", 0),
  row("pdf", "nova9Pro-9008.pdf"),
  row("pcb", "nova9Pro-HN1RENAM VG PCB Lay"),
  row("pdf", "nova9Pro-HN1RENAM VG-Compo"),
  row("pdf", "nova9Pro-HN1RENAM VG-image.p"),
  row("group", "Repair Case", 1),
  row("pdf", "nova9Pro plug-in card shows n", 2),
]

const INDENT: Record<string, string> = {
  "group-0": "pl-[61px] gap-1.5",
  "group-1": "pl-[81px] gap-1.5",
  "file-1": "pl-[83px] gap-1",
  "file-2": "pl-[103px] gap-1",
}

const MENU = ["File(F)", "VIP(V)", "Tool(T)", "Settings(S)", "PCB View settings(S)"]

/* ---------------------------------- Left side ---------------------------------- */

function NavItem({ label, active, children }: { label: string; active?: boolean; children: ReactNode }) {
  return (
    <button type="button" className={`flex h-[70px] w-full flex-col items-center gap-1 pt-3.5 ${active ? "text-[#2f9bff]" : "text-[#5b6478]"}`}>
      <span className="flex h-7 w-8 items-center justify-center">{children}</span>
      <span className="whitespace-nowrap leading-5">{label}</span>
    </button>
  )
}

function CategoryNav() {
  return (
    <nav className="flex w-[74px] shrink-0 flex-col items-center bg-white pt-0.5 text-[14px]">
      <fieldset className="w-14 min-w-0 rounded-lg border-2 border-dashed border-[#2f9bff] pb-[5px]">
        <legend className="mx-auto whitespace-nowrap leading-4 text-[#2f9bff]">VIP</legend>
        <NavItem label="Cour...">
          <svg viewBox="0 0 28 28" className="h-7 w-7">
            <circle cx="14" cy="14" r="14" fill="#a0a9c0" />
            <path d="M9.500 8.500q0-1.200 1-.7l10 5.400q1 .8 0 1.500l-10 5.500q-1 .5-1-.7z" fill="#fff" />
          </svg>
        </NavItem>
        <NavItem label="Phone" active>
          <svg viewBox="0 0 18 30" className="h-[30px] w-[18px] shrink-0">
            <defs>
              <linearGradient id="phoneFill" x1="0" x2="1">
                <stop offset="0" stopColor="#00f0ff" />
                <stop offset="1" stopColor="#2e9bff" />
              </linearGradient>
            </defs>
            <rect width="18" height="30" rx="3" fill="url(#phoneFill)" />
            <path d="M7 3.500h4.500M5 28h8" stroke="#fff" strokeWidth="1.300" strokeLinecap="round" />
          </svg>
        </NavItem>
        <NavItem label="Com...">
          <svg viewBox="0 0 30 20" className="h-5 w-[30px]">
            <path d="M4 1.500h22v15H4z" fill="none" stroke="#a0a9c0" strokeWidth="2" strokeLinejoin="round" />
            <path d="M0 17h30v1.500a1.500 1.500 0 0 1-1.500 1.500h-27A1.500 1.500 0 0 1 0 18.500z" fill="#a0a9c0" />
            <path d="M13 17.800h4" stroke="#fff" />
          </svg>
        </NavItem>
      </fieldset>

      <fieldset className="mt-[27px] w-14 min-w-0 rounded-lg border-2 border-dashed border-[#5b6478] pb-[5px]">
        <legend className="mx-auto whitespace-nowrap leading-4 text-[#5b6478]">Custom</legend>
        <NavItem label="Drone">
          <svg viewBox="0 0 28 28" className="h-7 w-7">
            <path d="M6 6l16 16M22 6L6 22" stroke="#a0a9c0" strokeWidth="3" />
            <circle cx="14" cy="14" r="4.500" fill="#a0a9c0" />
            <circle cx="14" cy="14" r="2.200" fill="none" stroke="#fff" />
            <g fill="#a0a9c0">
              <circle cx="5.500" cy="5.500" r="5.500" />
              <circle cx="22.500" cy="5.500" r="5.500" />
              <circle cx="5.500" cy="22.500" r="5.500" />
              <circle cx="22.500" cy="22.500" r="5.500" />
            </g>
            <g fill="none" stroke="#e4e7ee" strokeWidth="0.900" strokeDasharray="15 9">
              <circle cx="5.500" cy="5.500" r="3.800" />
              <circle cx="22.500" cy="5.500" r="3.800" />
              <circle cx="5.500" cy="22.500" r="3.800" />
              <circle cx="22.500" cy="22.500" r="3.800" />
            </g>
          </svg>
        </NavItem>
        <NavItem label="Gam...">
          <svg viewBox="0 0 28 14" className="mt-1 h-3.5 w-7">
            <rect width="28" height="14" rx="6" fill="#a0a9c0" />
            <path d="M7.500 3.500v7M4 7h7" stroke="#fff" strokeWidth="1.800" />
            <circle cx="18.500" cy="5" r="1.200" fill="#fff" />
            <circle cx="21.500" cy="9" r="1.200" fill="#fff" />
          </svg>
        </NavItem>
        <NavItem label="Car">
          <svg viewBox="0 0 28 23" className="h-[23px] w-7">
            <path fillRule="evenodd" d="M8 0h12q2.500 0 3.200 2.500L24.500 7H27q1 0 1 1t-1 1l-1 .5q1 1.500 1 3.500v8.500q0 1.500-1.500 1.500h-2.500q-1.500 0-1.500-1.500V20h-15v1.500Q6.500 23 5 23H2.500Q1 23 1 21.500V13q0-2 1-3.500L1 9Q0 9 0 8t1-1h2.500l1.300-4.500Q5.500 0 8 0zM8 2.200q-1 0-1.300 1L5.500 7.500q0 .8 1 .8h15q1 0 1-.8l-1.200-4.300q-.3-1-1.300-1zM6 13a1.800 1.800 0 1 0 .01 0zM22 13a1.800 1.800 0 1 0 .01 0zM12 14q-1 0-1 .8t1 .8h4q1 0 1-.8t-1-.8z" fill="#a0a9c0" />
          </svg>
        </NavItem>
      </fieldset>

      <div className="mt-2 w-full">
        <NavItem label="Favorites">
          <svg viewBox="0 0 28 27" className="h-[27px] w-7">
            <path d="M14 0.500q1 0 1.500 1l3.200 6.800 7.800 1q2.500.5.800 2.400l-5.500 5.100 1.500 7.900q.2 2.500-2 1.500L14 22.400l-7.300 3.800q-2.200 1-2-1.500l1.500-7.900-5.500-5.100Q-1 9.800 1.500 9.300l7.800-1 3.200-6.800q.5-1 1.500-1z" fill="#a0a9c0" />
          </svg>
        </NavItem>
      </div>
    </nav>
  )
}

function FileTree() {
  const [selected, setSelected] = useState("nova10-HL2NICN YiDianTong.pcb")

  return (
    <div className="flex min-w-0 flex-1 bg-[#f8f8f8]">
      <ul className="min-w-0 flex-1 overflow-hidden bg-linear-to-r from-[#d6dff0] via-[#ececf0] via-[14px] to-[#f8f8f8] to-[36px] pr-px">
        {TREE.map((item, i) => (
          <li key={item.label} className={`overflow-hidden ${i === 0 ? "-mt-1.5" : ""}`}>
            <button
              type="button"
              onClick={() => setSelected(item.label)}
              className={`flex h-6 items-center whitespace-nowrap ${INDENT[`${item.kind === "group" ? "group" : "file"}-${item.level}`]} ${item.label === selected ? "text-[#4b8ffb]" : "text-black"}`}
            >
              {item.kind === "group" ? <ToggleIcon /> : item.kind === "pdf" ? <PdfIcon /> : <PcbIcon />}
              <span>{item.label}</span>
            </button>
          </li>
        ))}
      </ul>
      <div className="w-[11px] shrink-0">
        <div className="h-44 rounded-b-full bg-[#666]" />
      </div>
      <div className="flex w-3 shrink-0 flex-col items-center bg-[#f0f0f0]">
        <svg viewBox="0 0 10 6" className="mt-1.5 h-1.5 w-2.5" fill="none" stroke="#444" strokeWidth="1.200">
          <path d="M1 5.500L5 1.500l4 4" />
        </svg>
        <div className="mt-[316px] h-[49px] w-2.5 rounded-full bg-[#666]" />
      </div>
    </div>
  )
}

function SidePanel() {
  const [query, setQuery] = useState("Mate70-HL1ZFTSHR SUB PCB")

  return (
    <aside className="flex w-[431px] shrink-0 flex-col border-r border-[#d9d9d9]">
      <div className="flex h-10 shrink-0 items-center border-b border-[#d9d9d9] bg-white px-[5px]">
        <button type="button" className="h-[30px] w-[49px] rounded border border-[#d9d9d9] bg-white text-center">Shrink</button>
        <div className="ml-2.5 flex h-[30px] flex-1 items-center rounded border border-[#d9d9d9] bg-white pr-1 pl-2">
          <input
            aria-label="Search model"
            value={query}
            onChange={e => setQuery(e.target.value)}
            className="min-w-0 flex-1 bg-transparent outline-none"
          />
          <button type="button" aria-label="History" className="mr-2">
            <svg viewBox="0 0 14 8" className="h-2 w-3.5" fill="none" stroke="#a0a4ab" strokeWidth="1.300">
              <path d="M1 1l6 6 6-6" />
            </svg>
          </button>
          <button type="button" aria-label="Clear" onClick={() => setQuery("")}>
            <svg viewBox="0 0 16 16" className="h-4 w-4">
              <circle cx="8" cy="8" r="8" fill="#4b8ffb" />
              <path d="M5 5l6 6M11 5l-6 6" stroke="#fff" strokeWidth="1.500" />
            </svg>
          </button>
        </div>
        <button type="button" aria-label="Search" className="ml-2.5 flex h-[30px] w-[49px] items-center justify-center rounded-sm bg-[#4b93ff]">
          <svg viewBox="0 0 20 20" className="h-5 w-5" fill="none" stroke="#fff" strokeWidth="1.500">
            <circle cx="10" cy="10" r="8.500" />
            <path d="M15 15l3.500 3.500" />
          </svg>
        </button>
      </div>
      <div className="flex min-h-0 flex-1">
        <CategoryNav />
        <FileTree />
      </div>
    </aside>
  )
}

/* ---------------------------------- Main area ---------------------------------- */

function Tool({ label, on, children }: { label: string; on?: boolean; children: ReactNode }) {
  return (
    <button type="button" aria-label={label} title={label} className="flex h-6 w-[26px] items-center justify-center">
      <span className={`flex h-6 w-6 items-center justify-center ${on ? "bg-[#b9d3ff]" : ""}`}>{children}</span>
    </button>
  )
}

function Divider() {
  return <span className="mx-0.5 h-5 w-px bg-[#c8c8c8]" />
}

function Glyph({ children, color = "#333" }: { children: ReactNode; color?: string }) {
  return (
    <svg viewBox="0 0 20 20" className="h-5 w-5 shrink-0" fill="none" stroke={color} strokeWidth="1.500">
      {children}
    </svg>
  )
}

function Toolbar() {
  return (
    <div className="flex h-[26px] shrink-0 items-center bg-[#fafafa] pr-1.5 pl-1">
      <Tool label="Split view">
        <Glyph><path d="M1.500 1.500h7v17h-7zM11.500 1.500h7v17h-7z" strokeWidth="1" /></Glyph>
      </Tool>
      <Divider />
      <Tool label="Zoom in">
        <Glyph color="#111"><circle cx="9.500" cy="9.500" r="6.500" strokeWidth="1.800" /><path d="M14.500 14.500l3.500 3.500M9.500 6.500v6M6.500 9.500h6" strokeWidth="2" /></Glyph>
      </Tool>
      <Tool label="Zoom out">
        <Glyph><circle cx="9.500" cy="9.500" r="7" /><path d="M14.500 14.500l3.500 3.500M6.500 9.500h6" /></Glyph>
      </Tool>
      <Divider />
      <Tool label="Fit">
        <Glyph><path d="M2 6V2h4M14 2h4v4M18 14v4h-4M6 18H2v-4" strokeWidth="1.200" /><circle cx="10" cy="10" r="5.500" strokeWidth="1.200" /></Glyph>
      </Tool>
      <Divider />
      <Tool label="Rotate left">
        <Glyph><rect x="2" y="7.500" width="14" height="11.500" rx="1" /><path d="M18.500 9Q18.500 3.500 13 3.500H8M11 0.500l-3 3 3 3" /></Glyph>
      </Tool>
      <Tool label="Rotate right">
        <Glyph><rect x="4" y="7.500" width="14" height="11.500" rx="1" /><path d="M1.500 9Q1.500 3.500 7 3.500h5M9 0.500l3 3-3 3" /></Glyph>
      </Tool>
      <Divider />
      <Tool label="Format">
        <Glyph><path d="M3 1.500h12v5H3zM15 4h3v5.500H9.500V13M8 13h3v6H8z" /></Glyph>
      </Tool>
      <Divider />
      <Tool label="Mirror">
        <Glyph><path d="M8 1v18M12 1v18M1.500 2.500h1.500L5 5v10l-2 2.500H1.500zM18.500 2.500H17L15 5v10l2 2.500h1.500z" strokeWidth="1.200" /></Glyph>
      </Tool>
      <Tool label="Highlight" on>
        <Glyph color="#f00"><path d="M1.500 11.500q0-8 8.500-8t8.500 8zM10 1v2.500M7 12q0 3 3 3t3-3M4 14.500l-2 2M16 14.500l2 2M7 16.500l-1 2M13 16.500l1 2M10 17v2" /></Glyph>
      </Tool>
      <button type="button" className="h-6 w-[26px] text-center">3D</button>
      <Tool label="Diode" on>
        <svg viewBox="0 0 24 24" className="h-6 w-6">
          <path d="M0 12h24M19 6v12" stroke="#4b8ffb" strokeWidth="1.500" />
          <path d="M8 6l10 6-10 6z" fill="#4b8ffb" />
        </svg>
      </Tool>
      <Tool label="Routes" on>
        <Glyph>
          <rect x="0.700" y="0.700" width="18.600" height="18.600" rx="2" stroke="#444" strokeWidth="1.300" />
          <path d="M2 3l16 14.500" stroke="#12c43c" strokeWidth="1.300" />
          <path d="M2 17h2.500l2-3" stroke="#f00" strokeWidth="1.300" />
          <circle cx="7.500" cy="12.500" r="1.500" stroke="#f00" strokeWidth="1.300" />
          <path d="M2 8h3l2 2" stroke="#f00" strokeWidth="1.200" />
          <path d="M18.500 9.500L15 8.500 14 6" stroke="#4b8ffb" strokeWidth="1.300" />
          <circle cx="13.500" cy="4.500" r="1.500" stroke="#4b8ffb" strokeWidth="1.300" />
        </Glyph>
      </Tool>
      <Tool label="Curve">
        <Glyph color="#111"><circle cx="3" cy="17" r="1.700" /><circle cx="17" cy="3.500" r="1.700" /><path d="M3.500 15Q5 5 15 4" /></Glyph>
      </Tool>
      <Divider />
      <Tool label="Mouse">
        <Glyph><rect x="4" y="2" width="12" height="16" rx="5" /><path d="M4 9h12M10 2v3" /><rect x="9" y="4.500" width="2" height="4" rx="1" /></Glyph>
      </Tool>
      <Divider />
      <button type="button" className="ml-px h-[22px] w-[109px] whitespace-nowrap border border-[#f00] text-center leading-5">[ColorScheme]</button>
      <Divider />
      <Tool label="Visibility">
        <Glyph color="#4b8ffb"><path d="M1 10q9-14 18 0-9 14-18 0z" strokeWidth="1.300" /><circle cx="10" cy="10" r="4" strokeWidth="1.300" /><circle cx="10" cy="10" r="1.500" strokeWidth="1.300" /></Glyph>
      </Tool>
      <button type="button" aria-label="Properties panel" className="ml-auto">
        <svg viewBox="0 0 22 19" className="h-[19px] w-[22px]" fill="none" stroke="#777" strokeWidth="2">
          <path d="M1 1h20v17H1zM7.500 1v17" />
          <path d="M11 5.500h6M13 8.500h4M11 11.500h6M11 14.500h6" strokeWidth="1.300" />
        </svg>
      </button>
    </div>
  )
}

function CollapseHandle({ side }: { side: "left" | "right" }) {
  return (
    <button type="button" aria-label={`Collapse ${side} panel`} className="block w-full">
      <svg viewBox="0 0 10 110" preserveAspectRatio="none" className="h-[110px] w-full">
        <path
          d={side === "left" ? "M0 .5L7 10q2 3 2 6v78q0 3-2 6l-7 9.500z" : "M10 .5L2 10q-2 3-2 6v78q0 3 2 6l8 9.500z"}
          fill="#d9ebff"
          stroke="#9ccbf5"
        />
        <path d="M6 50l-3 4 3 4" fill="none" stroke="#3d9be8" strokeWidth="1.300" />
      </svg>
    </button>
  )
}

export default function App() {
  return (
    <div className="flex h-screen w-full flex-col overflow-hidden bg-[#fafafa] font-['Noto_Sans',sans-serif] text-[14px] text-black">
      <header className="flex h-10 shrink-0 items-center bg-linear-to-r from-[#1fa4ff] via-[#3277ff] via-15% to-[#2b9dff] px-3 text-white">
        <LogoIcon />
        <h1 className="ml-3.5 flex-1 whitespace-nowrap">XZZ Schematics V4.77 [ VIP Due date: 2025-10-30 17:50:47 ]</h1>
        <button type="button" aria-label="Toolbox">
          <svg viewBox="0 0 16 16" className="h-4 w-4" fill="none" stroke="#e8e337" strokeWidth="1.400">
            <path d="M1 5.500q0-1.500 1.500-1.500h11Q15 4 15 5.500v8q0 1.500-1.500 1.500h-11Q1 15 1 13.500zM5 4V2.500Q5 1 6.500 1h3Q11 1 11 2.500V4M4 9h8" />
          </svg>
        </button>
        <span className="mr-3 ml-[11px] h-5 w-px bg-white/50" />
        <div className="mr-[5px] flex items-center gap-3.5">
          <button type="button" aria-label="Minimize">
            <svg viewBox="0 0 16 16" className="h-4 w-4"><path d="M0 8h16" stroke="#fff" strokeWidth="1.800" /></svg>
          </button>
          <button type="button" aria-label="Maximize">
            <svg viewBox="0 0 16 16" className="h-4 w-4"><rect x="0.800" y="0.800" width="14.400" height="14.400" rx="2.500" fill="none" stroke="#fff" strokeWidth="1.500" /></svg>
          </button>
          <button type="button" aria-label="Close">
            <svg viewBox="0 0 16 16" className="h-4 w-4"><path d="M0.500 0.500l15 15M15.500 0.500l-15 15" stroke="#fff" strokeWidth="1.600" /></svg>
          </button>
        </div>
      </header>

      <div className="flex h-8 shrink-0 items-center gap-[19px] border-b border-[#d9d9d9] bg-[#efefef] px-[18px] pt-px">
        {MENU.map(item => (
          <button key={item} type="button" className="whitespace-nowrap">{item}</button>
        ))}
      </div>

      <div className="flex min-h-0 flex-1">
        <SidePanel />

        <div className="flex w-2.5 shrink-0 items-center border-r border-[#d9d9d9] bg-[#fbfdfb] pt-[18px]">
          <CollapseHandle side="left" />
        </div>

        <div className="flex min-w-0 flex-1 flex-col">
          <div className="flex h-[34px] shrink-0 items-center gap-[5px] border-b border-[#d9d9d9] pr-[11px] pl-2">
            <button type="button" className="flex h-6 w-[139px] items-center gap-1 whitespace-nowrap rounded-[3px] border border-[#777] bg-white pl-[5px] text-[#808080]">
              <svg viewBox="0 0 18 18" className="h-[18px] w-[18px] shrink-0" fill="none" stroke="#111" strokeWidth="1.500">
                <path d="M1 9.500L9 1.500l8 8M3 8v9h12V8M7 17v-6h4v6" />
              </svg>
              Member Center
            </button>
            <button type="button" className="h-6 w-[267px] whitespace-nowrap rounded-[3px] border border-black bg-white text-center text-[15px] font-bold leading-5">
              nova10-HL2NICN YiDianTong.pcb
            </button>
            <button type="button" aria-label="Close all tabs" className="ml-auto">
              <svg viewBox="0 0 19 19" className="h-[19px] w-[19px]">
                <path d="M1.500 15V1.500H16" fill="none" stroke="#888" strokeWidth="2.500" />
                <rect x="5" y="5" width="14" height="14" rx="2" fill="#888" />
                <path d="M9.500 9.500l5 5M14.500 9.500l-5 5" stroke="#fff" strokeWidth="1.700" />
              </svg>
            </button>
          </div>

          <div className="flex min-h-0 flex-1">
            <main className="flex min-w-0 flex-1 flex-col">
              <Toolbar />
              <div className="min-h-0 flex-1 bg-white">
                <BoardView />
              </div>
            </main>
            <div className="flex w-2.5 shrink-0 items-center border-l border-[#d9d9d9] pt-[30px]">
              <CollapseHandle side="right" />
            </div>
          </div>
        </div>
      </div>

      <footer className="flex h-5 shrink-0 items-center justify-center bg-[#0392dc] font-['DejaVu_Sans_Mono',monospace] text-[15px] leading-5 text-white">
        XZZ Schematics https://www.xzz.hk
      </footer>
    </div>
  )
}
